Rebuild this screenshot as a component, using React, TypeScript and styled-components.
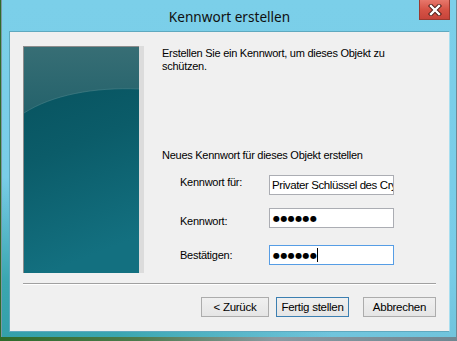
import styled, { createGlobalStyle } from "styled-components";

const GlobalStyle = createGlobalStyle`
  html, body {
    margin: 0;
    padding: 0;
  }
  body {
    width: 457px;
    height: 341px;
    overflow: hidden;
    font-family: "Liberation Sans", Arial, sans-serif;
  }
`;

const Desktop = styled.div`
  width: 457px;
  height: 341px;
  overflow: hidden;
  background: linear-gradient(90deg, #2e6b2a 0%, #4d7b4c 30%, #8a9aa2 60%, #6f8792 100%);
`;

const Window = styled.div`
  width: 455px;
  height: 337px;
  margin-left: 1px;
  box-sizing: border-box;
  padding: 0 6px 5px 7px;
  display: flex;
  flex-direction: column;
  border-left: 1px solid #7d97a3;
  background:
    radial-gradient(ellipse 330px 160px at 0% 100%, #34a0aa 0%, #3aa6b0 35%, rgba(58, 166, 176, 0) 100%),
    linear-gradient(180deg, #7bcfe9 0%, #78cce7 80%, #70c4dc 100%);
`;

const TitleBar = styled.div`
  height: 31px;
  display: grid;
  grid-template-columns: 1fr auto 1fr;
  align-items: start;
`;

const Title = styled.div`
  grid-column: 2;
  padding-top: 7px;
  font-family: "Noto Sans", "Open Sans", sans-serif;
  font-size: 13.6px;
  color: #101010;
`;

const CloseButton = styled.div`
  grid-column: 3;
  justify-self: end;
  width: 31px;
  height: 20px;
  box-sizing: border-box;
  border: 1px solid #9b3a30;
  border-top: none;
  background: linear-gradient(180deg, #e7776b 0%, #d65346 50%, #c7443a 100%);
  display: flex;
  align-items: center;
  justify-content: center;
`;

const Client = styled.div`
  flex: 1;
  background: #f0f0f0;
  border: 1px solid #5fa9bf;
  border-right-color: #a9dff0;
  box-sizing: border-box;
  padding: 14px 13px 0 13px;
  display: flex;
  flex-direction: column;
  font-size: 11px;
  letter-spacing: -0.26px;
  color: #000;
`;

const TopArea = styled.div`
  display: flex;
  height: 227px;
`;

const ImageFrame = styled.div`
  width: 116px;
  height: 227px;
  box-sizing: border-box;
  border-top: 1px solid #8c8c8c;
  border-left: 1px solid #8c8c8c;
  box-shadow: 5px 0 0 #dcdcdc;
  flex-shrink: 0;
  svg {
    display: block;
  }
`;

const Content = styled.div`
  margin-left: 23px;
  display: flex;
  flex-direction: column;
`;

const Intro = styled.p`
  margin: 1px 0 0 0;
  line-height: 13px;
  width: 235px;
`;

const SectionLabel = styled.div`
  margin-top: 76px;
  line-height: 13px;
`;

const Form = styled.div`
  margin-top: 13px;
  margin-left: 18px;
  display: grid;
  grid-template-columns: 89px 125px;
`;

const Label = styled.div<{ $top: number }>`
  margin-top: ${(p) => p.$top}px;
  line-height: 13px;
`;

const Field = styled.div<{ $top: number; $focused?: boolean }>`
  margin-top: ${(p) => p.$top}px;
  height: 20px;
  box-sizing: border-box;
  border: 1px solid ${(p) => (p.$focused ? "#569de5" : "#abadb3")};
  background: #fff;
  padding: 0 0 0 2px;
  display: flex;
  align-items: center;
  overflow: hidden;
  white-space: nowrap;
`;

const FieldText = styled.span`
  font-size: 11.5px;
  letter-spacing: -0.4px;
`;

const Dots = styled.span`
  font-family: "DejaVu Sans", sans-serif;
  font-size: 8px;
  letter-spacing: 0.4px;
  font-weight: bold;
  padding-left: 1px;
`;

const Caret = styled.span`
  display: inline-block;
  width: 1px;
  height: 14px;
  background: #000;
`;

const Separator = styled.div`
  margin-top: 10px;
  height: 0;
  border-top: 1px solid #a0a0a0;
  border-bottom: 1px solid #ffffff;
`;

const ButtonRow = styled.div`
  margin-top: 12px;
  display: flex;
  justify-content: flex-end;
  gap: 7px;
`;

const Button = styled.div<{ $width: number; $default?: boolean; $gapLeft?: number }>`
  width: ${(p) => p.$width}px;
  height: 20px;
  margin-left: ${(p) => p.$gapLeft ?? 0}px;
  box-sizing: border-box;
  border: 1px solid ${(p) => (p.$default ? "#3c7fb1" : "#acacac")};
  background: linear-gradient(180deg, #f0f0f0 0%, #e5e5e5 100%);
  display: flex;
  align-items: center;
  justify-content: center;
  font-size: 11.5px;
`;

function PanelImage() {
  return (
    <svg width="115" height="226" viewBox="0 0 115 226">
      <defs>
        <linearGradient id="bodyGrad" x1="0" y1="0" x2="0.2" y2="1">
          <stop offset="0" stopColor="#064f5b" />
          <stop offset="0.5" stopColor="#0b5c69" />
          <stop offset="1" stopColor="#137080" />
        </linearGradient>
        <linearGradient id="capGrad" x1="0" y1="0" x2="0" y2="1">
          <stop offset="0" stopColor="#376e75" />
          <stop offset="1" stopColor="#24626b" />
        </linearGradient>
      </defs>
      <rect width="115" height="226" fill="url(#bodyGrad)" />
      <path d="M0 0 H115 V42 C70 40 28 48 0 66 Z" fill="url(#capGrad)" />
      <path d="M0 66 C28 48 70 40 115 42" fill="none" stroke="#4a8288" strokeOpacity="0.6" strokeWidth="1" />
    </svg>
  );
}

function CloseGlyph() {
  return (
    <svg width="14" height="12" viewBox="0 0 14 12">
      <path
        d="M3 2 L11 10 M11 2 L3 10"
        stroke="#4a1a14"
        strokeWidth="4.2"
        strokeLinecap="square"
      />
      <path
        d="M3 2 L11 10 M11 2 L3 10"
        stroke="#ffffff"
        strokeWidth="2.4"
        strokeLinecap="square"
      />
    </svg>
  );
}

export default function App() {
  return (
    <>
      <GlobalStyle />
      <Desktop>
        <Window>
          <TitleBar>
            <Title>Kennwort erstellen</Title>
            <CloseButton>
              <CloseGlyph />
            </CloseButton>
          </TitleBar>
          <Client>
            <TopArea>
              <ImageFrame>
                <PanelImage />
              </ImageFrame>
              <Content>
                <Intro>
                  Erstellen Sie ein Kennwort, um dieses Objekt zu schützen.
                </Intro>
                <SectionLabel>Neues Kennwort für dieses Objekt erstellen</SectionLabel>
                <Form>
                  <Label $top={1}>Kennwort für:</Label>
                  <Field $top={0}>
                    <FieldText>Privater Schlüssel des Cry</FieldText>
                  </Field>
                  <Label $top={20}>Kennwort:</Label>
                  <Field $top={13}>
                    <Dots>●●●●●●</Dots>
                  </Field>
                  <Label $top={21}>Bestätigen:</Label>
                  <Field $top={17} $focused>
                    <Dots>●●●●●●</Dots>
                    <Caret />
                  </Field>
                </Form>
              </Content>
            </TopArea>
            <Separator />
            <ButtonRow>
              <Button $width={68}>&lt; Zurück</Button>
              <Button $width={73} $default>Fertig stellen</Button>
              <Button $width={73} $gapLeft={7}>Abbrechen</Button>
            </ButtonRow>
          </Client>
        </Window>
      </Desktop>
    </>
  );
}
